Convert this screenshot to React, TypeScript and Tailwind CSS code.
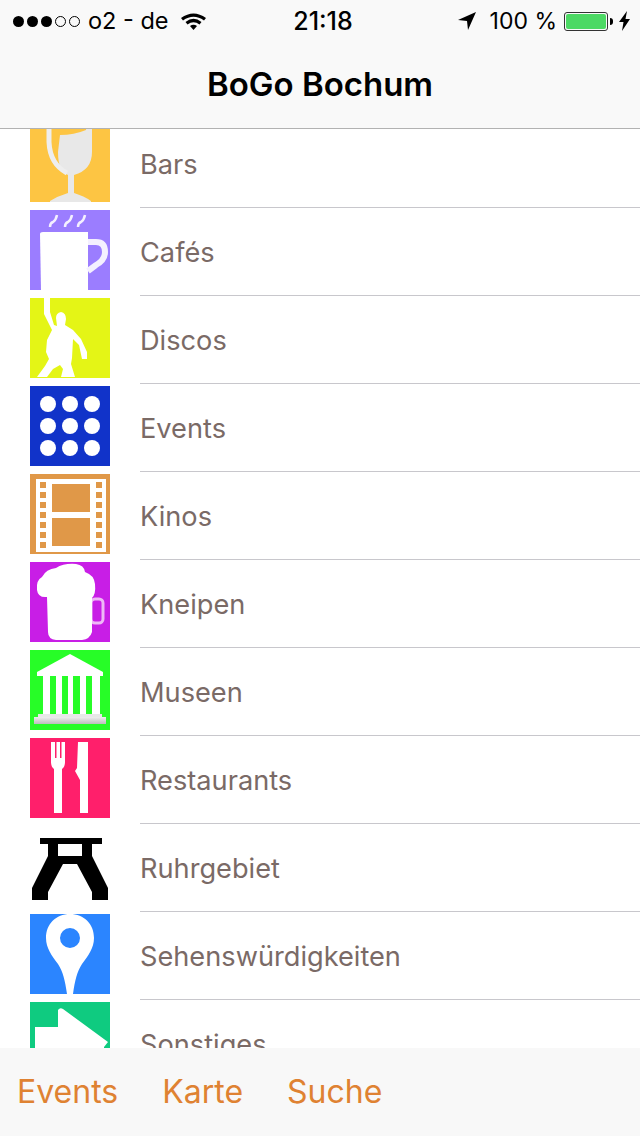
import React from 'react';

const IconBars = () => (
  <svg viewBox="0 0 80 80" className="block w-full h-full">
    <rect width="80" height="80" fill="#fdc543" />
    <path d="M30 13 Q44 13 56 8 L57 0 H62 V30 Q62 48 44 53 V71 Q54 74 61 79 V80 H20 V79 Q28 74 38 71 V53 Q28 49 28 30 Z" fill="#e8e8e8" />
    <path d="M19 0 V20 Q20 42 37 51" fill="none" stroke="#eeeeee" strokeWidth="5" />
  </svg>
);

const IconCafe = () => (
  <svg viewBox="0 0 80 80" className="block w-full h-full">
    <rect width="80" height="80" fill="#9b7dff" />
    <path d="M10 24 Q10 22 13 22 H58 V80 H11 Z" fill="#fff" />
    <path d="M58 32 H66 Q75 32 75 42 Q75 50 66 55 L58 61" fill="none" stroke="#f4f0ff" strokeWidth="6" />
    <path d="M20 17 Q20 13 23 12 Q26 10 27 5 M35 17 Q35 13 38 12 Q41 10 42 5 M48 17 Q48 13 51 12 Q54 10 55 5" fill="none" stroke="#f4f0ff" strokeWidth="2.5" />
  </svg>
);

const IconDisco = () => (
  <svg viewBox="0 0 80 80" className="block w-full h-full">
    <rect width="80" height="80" fill="#e4f516" />
    <path d="M14 0 H20 L20 14 L24 27 L27 28 L26 20 Q26 15 31 14 Q36 15 36 21 L35 27 L43 32 L51 41 L57 54 L57 61 L52 61 L49 47 L43 41 L42 60 L41 66 L45 79 H31 L33 71 L30 67 L23 71 L17 79 H7 L15 68 L19 61 L16 54 L17 42 L22 32 L14 16 Z" fill="#fff" />
  </svg>
);

const IconEvents = () => (
  <svg viewBox="0 0 80 80" className="block w-full h-full">
    <rect width="80" height="80" fill="#1133c9" />
    {[18, 40, 62].map(y =>
      [18, 40, 62].map(x => <circle key={`${x}-${y}`} cx={x} cy={y} r="8" fill="#fff" />)
    )}
  </svg>
);

const IconKinos = () => (
  <svg viewBox="0 0 80 80" className="block w-full h-full">
    <rect width="80" height="80" fill="#e09848" />
    <rect x="6" y="5" width="70" height="73" fill="#fff" />
    {[8, 18, 28, 38, 48, 58, 68].map(y => (
      <React.Fragment key={y}>
        <rect x="10" y={y} width="6" height="6" fill="#e09848" />
        <rect x="66" y={y} width="6" height="6" fill="#e09848" />
      </React.Fragment>
    ))}
    <rect x="22" y="10" width="38" height="28" fill="#e09848" />
    <rect x="22" y="44" width="38" height="28" fill="#e09848" />
  </svg>
);

const IconKneipen = () => (
  <svg viewBox="0 0 80 80" className="block w-full h-full">
    <rect width="80" height="80" fill="#c81ee6" />
    <rect x="61" y="37" width="12" height="24" rx="4" fill="none" stroke="#eeb8f6" strokeWidth="3" />
    <path d="M17 35 Q8 36 7 28 Q6 18 12 15 Q16 7 26 6 Q34 1 46 2 Q54 3 55 10 Q64 13 65 22 Q66 32 62 36 V70 Q60 77 52 78 H26 Q18 77 18 70 Z" fill="#fff" />
  </svg>
);

const IconMuseen = () => (
  <svg viewBox="0 0 80 80" className="block w-full h-full">
    <defs>
      <linearGradient id="museumBase" x1="0" y1="0" x2="0" y2="1">
        <stop offset="0" stopColor="#eeeeee" />
        <stop offset="1" stopColor="#bdbdbd" />
      </linearGradient>
    </defs>
    <rect width="80" height="80" fill="#27fd27" />
    <path d="M40 4 L73 22 V26 H7 V22 Z" fill="#fff" />
    <path d="M13 26 H20 V64 H13 Z M26 26 H32 V64 H26 Z M38 26 H43 V64 H38 Z M50 26 H56 V64 H50 Z M62 26 H70 V64 H62 Z" fill="#fff" />
    <rect x="8" y="64" width="64" height="3" fill="#e8e8e8" />
    <rect x="4" y="67" width="72" height="7" fill="url(#museumBase)" />
  </svg>
);

const IconRestaurants = () => (
  <svg viewBox="0 0 80 80" className="block w-full h-full">
    <rect width="80" height="80" fill="#ff1f6b" />
    <path d="M21 4 H25 V20 H26.5 V4 H30 V20 H31.5 V4 H35 V24 Q35 29 32 31 V75 H24 V31 Q21 29 21 24 Z" fill="#fff" />
    <path d="M48 4 H58 V75 H50 V42 L45 33 L47 30 Z" fill="#fff" />
  </svg>
);

const IconRuhr = () => (
  <svg viewBox="0 0 80 80" className="block w-full h-full">
    <path d="M10 12 H72 V18 H62 V30 L78 62 V74 H62 V66 L47 38 H33 L18 66 V74 H2 V62 L18 30 V18 H10 Z" fill="#000" />
    <rect x="28" y="18" width="24" height="12" fill="#fff" />
  </svg>
);

const IconSehens = () => (
  <svg viewBox="0 0 80 80" className="block w-full h-full">
    <rect width="80" height="80" fill="#2b85ff" />
    <path fillRule="evenodd" d="M40 0 C54 0 64 10 64 24 C64 34 58 42 52 50 C47 58 45 66 43 80 H37 C35 66 33 58 28 50 C22 42 16 34 16 24 C16 10 26 0 40 0 Z M40 14 A10 10 0 1 0 40 34 A10 10 0 1 0 40 14 Z" fill="#fff" />
  </svg>
);

const IconSonstiges = () => (
  <svg viewBox="0 0 80 80" className="block w-full h-full">
    <rect width="80" height="80" fill="#0fcb80" />
    <path d="M5 25 H28 V8 Q30 5 33 7 L78 40 L74 45 V80 H5 Z" fill="#fff" />
  </svg>
);

const rows: { label: string; icon: React.ReactNode }[] = [
  { label: 'Bars', icon: <IconBars /> },
  { label: 'Cafés', icon: <IconCafe /> },
  { label: 'Discos', icon: <IconDisco /> },
  { label: 'Events', icon: <IconEvents /> },
  { label: 'Kinos', icon: <IconKinos /> },
  { label: 'Kneipen', icon: <IconKneipen /> },
  { label: 'Museen', icon: <IconMuseen /> },
  { label: 'Restaurants', icon: <IconRestaurants /> },
  { label: 'Ruhrgebiet', icon: <IconRuhr /> },
  { label: 'Sehenswürdigkeiten', icon: <IconSehens /> },
  { label: 'Sonstiges', icon: <IconSonstiges /> },
];

const StatusBar = () => (
  <div className="h-[42px] grid grid-cols-[1fr_auto_1fr] items-center text-[23.5px] leading-none text-black">
    <div className="flex items-center pl-[13px]">
      <div className="flex gap-[3px]">
        {[0, 1, 2].map(i => <span key={i} className="w-[11px] h-[11px] rounded-full bg-black" />)}
        {[0, 1].map(i => <span key={i} className="w-[11px] h-[11px] rounded-full border border-black" />)}
      </div>
      <span className="ml-2">o2 - de</span>
      <svg viewBox="0 0 25 18" className="ml-[12px] w-[25px] h-[18px]">
        <path d="M0 6 Q12.5 -3 25 6 L23 8.5 Q12.5 1 2 8.5 Z M4.5 10 Q12.5 3.5 20.5 10 L18.5 12.5 Q12.5 8 6.5 12.5 Z M9 14 Q12.5 11.5 16 14 L12.5 18 Z" fill="#000" />
      </svg>
    </div>
    <div className="font-medium text-[25px] ml-[6px]">21:18</div>
    <div className="flex items-center justify-end pr-[10px]">
      <svg viewBox="0 0 18 18" className="w-[18px] h-[18px]">
        <path d="M18 0 L0 8 L9 9 L10 18 Z" fill="#000" />
      </svg>
      <span className="ml-[14px] text-[23px]">100 %</span>
      <div className="ml-[7px] flex items-center">
        <div className="w-11 h-[19px] rounded-[3px] border border-[#333] p-[1px]">
          <div className="w-full h-full rounded-[2px] bg-[#4cd964]" />
        </div>
        <div className="w-[3px] h-[7px] bg-black ml-[2px] rounded-r-sm" />
      </div>
      <svg viewBox="0 0 11 20" className="ml-[6px] w-[11px] h-5">
        <path d="M8 0 L0 11 H4.5 L3 20 L11 8 H6.5 Z" fill="#000" />
      </svg>
    </div>
  </div>
);

const App: React.FC = () => {
  return (
    <div className="flex flex-col w-[640px] h-[1136px] overflow-hidden bg-white font-['Inter','Liberation_Sans',sans-serif]">
      <header className="relative z-10 shrink-0 h-[129px] bg-[#f9f9f9] border-b border-[#b2b2b2]">
        <StatusBar />
        <h1 className="h-[86px] flex items-center justify-center text-[33px] font-semibold text-black">BoGo Bochum</h1>
      </header>
      <main className="flex-1 overflow-hidden">
        <ul className="-mt-[9px]">
          {rows.map(row => (
            <li key={row.label} className="flex h-[88px]">
              <div className="ml-[30px] mt-[2px] w-20 h-20 shrink-0">{row.icon}</div>
              <div className="ml-[30px] flex-1 flex items-center pt-1 border-b border-[#c8c7cc] text-[27.2px] text-[#7a6a66]">
                {row.label}
              </div>
            </li>
          ))}
        </ul>
      </main>
      <nav className="relative shrink-0 h-[88px] bg-[#f8f8f8] flex items-center pl-[17px] gap-[44px] text-[32px] text-[#df8232]">
        <span>Events</span>
        <span>Karte</span>
        <span>Suche</span>
      </nav>
    </div>
  );
};

export default App;
